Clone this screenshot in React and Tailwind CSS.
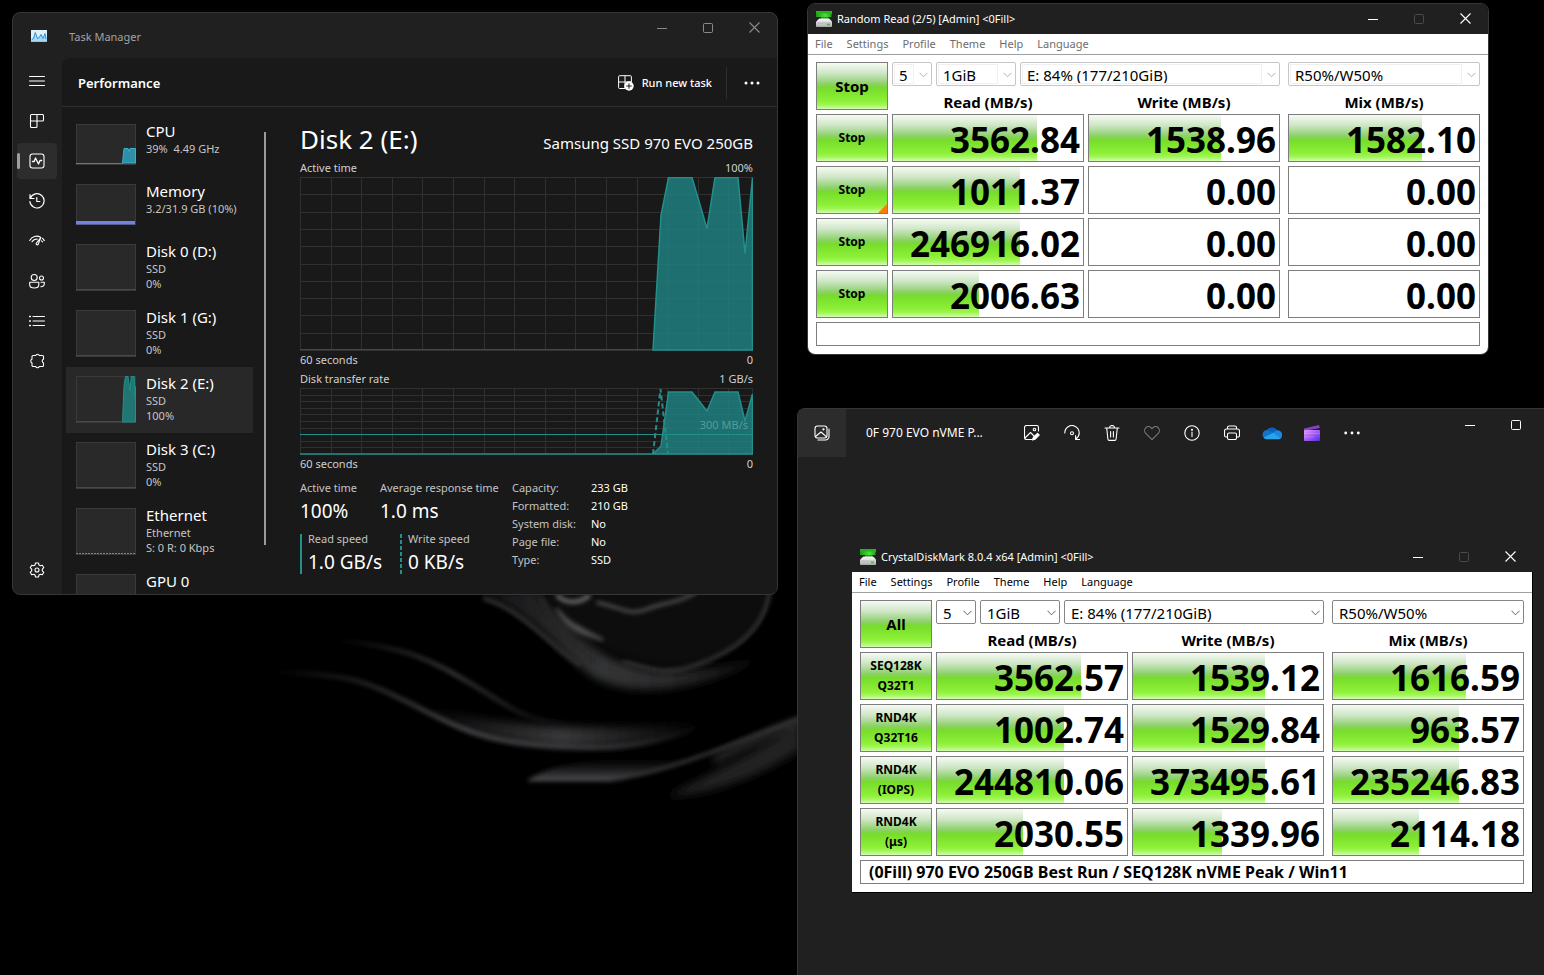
import React from "react";

const DiskIcon = () => (
  <svg width="16" height="16" viewBox="0 0 16 16" aria-hidden="true" className="shrink-0">
    <defs>
      <linearGradient id="diskGreen" x1="0" x2="1">
        <stop offset="0" stopColor="#1f9417" />
        <stop offset="0.6" stopColor="#4be03a" />
        <stop offset="1" stopColor="#1fa617" />
      </linearGradient>
      <linearGradient id="diskGrey" x1="0" y1="0" x2="0" y2="1">
        <stop offset="0" stopColor="#f4f4f4" />
        <stop offset="0.5" stopColor="#dcdcde" />
        <stop offset="1" stopColor="#a4a4a8" />
      </linearGradient>
    </defs>
    <rect x="0" y="0" width="16" height="3" fill="#27b31c" />
    <rect x="0" y="2.500" width="15.500" height="3.500" fill="url(#diskGreen)" />
    <rect x="5" y="6" width="7.500" height="2" fill="#23991a" />
    <path d="M3.500 7.500h9.500Q15.500 9 16 11v4.200a.8.800 0 0 1-.8.800H.8a.8.800 0 0 1-.8-.8V11Q1 9 3.500 7.500z" fill="url(#diskGrey)" />
    <path d="M.8 12h14.400" stroke="#98989c" strokeWidth=".6" />
    <rect x="11" y="12.800" width="3" height="1.400" fill="#35c327" />
  </svg>
);

function CaptionButtons({ color, disabledMax, height, noClose }) {
  const base = "flex w-[46px] items-center justify-center " + height + " " + color;
  return (
    <div className="ml-auto flex shrink-0 self-start">
      <button aria-label="Minimize" className={base}>
        <svg width="10" height="10" viewBox="0 0 10 10"><path d="M0 5.500h10" stroke="currentColor" /></svg>
      </button>
      <button aria-label="Maximize" className={base} disabled={disabledMax}>
        <svg width="10" height="10" viewBox="0 0 10 10" className={disabledMax ? "text-[#4a4a4a]" : ""}>
          <rect x=".5" y=".5" width="9" height="9" rx="1" fill="none" stroke="currentColor" />
        </svg>
      </button>
      {!noClose && (
        <button aria-label="Close" className={base}>
          <svg width="11" height="11" viewBox="0 0 11 11"><path d="M.5.5l10 10M10.500.5l-10 10" stroke="currentColor" strokeWidth="1.100" /></svg>
        </button>
      )}
    </div>
  );
}

/* ---------- Disk benchmark window ---------- */

function Combo({ label, value, disabled, className }) {
  return (
    <div className={"relative h-6 " + className}>
      <select
        aria-label={label}
        disabled={disabled}
        defaultValue={value}
        className={
          "block h-6 w-full appearance-none rounded-xs border bg-white pl-1.5 pt-0.5 text-[15px] leading-5 text-black opacity-100 " +
          (disabled ? "border-[#c6c6c6]" : "border-[#868686]")
        }
      >
        <option>{value}</option>
      </select>
      {disabled && <span className="pointer-events-none absolute inset-y-0.5 left-0.5 right-[18px] border border-[#f0f0f0]" />}
      <svg width="9" height="6" viewBox="0 0 9 6" className={"pointer-events-none absolute right-1 top-2.5 " + (disabled ? "text-[#b4b4b4]" : "text-[#606060]")}>
        <path d="M.5.8l4 4 4-4" fill="none" stroke="currentColor" />
      </svg>
    </div>
  );
}

const GREEN =
  "bg-[linear-gradient(to_bottom,#f6fbf4_0%,#cfe6c8_22%,#8bd066_46%,#77dc2b_54%,#8cf036_82%,#9ef552_90%,#d2fbb0_100%)]";

function Score({ value, fill, last }) {
  return (
    <td className={"p-0 " + (last ? "pl-1" : "")}>
      <div className="relative h-12 border border-[#7d7d7d] bg-white">
        <div className={"absolute inset-y-0 left-0 " + GREEN} style={{ width: fill + "%" }} />
        <div className="relative pr-[3px] text-right text-[35px] font-bold leading-[49px] text-black">{value}</div>
      </div>
    </td>
  );
}

function Benchmark({ title, menuColor, disabled, main, rows, status, frame, bodyFrame, statusLabel }) {
  return (
    <section className={"flex max-w-full flex-col overflow-hidden " + frame}>
      <header className="flex h-[30px] items-center bg-[#202020] pl-2">
        <DiskIcon />
        <h2 className="pl-[5px] text-[11px] leading-4 text-white">{title}</h2>
        <CaptionButtons color="text-white" height="h-[29px]" disabledMax />
      </header>
      <div className={"flex flex-col " + bodyFrame}>
        <nav className={"flex h-[21px] border-b border-[#a0a0a0] bg-white text-[11px] leading-5 " + menuColor}>
          {["File", "Settings", "Profile", "Theme", "Help", "Language"].map((m) => (
            <button key={m} className="px-[7px]">{m}</button>
          ))}
        </nav>
        <div className="flex flex-col bg-white px-1 pb-2 pt-[3px] text-black">
          <table className="w-full table-fixed border-separate border-spacing-1">
            <colgroup>
              <col className="w-[72px]" />
              <col />
              <col />
              <col className="w-[196px]" />
            </colgroup>
            <tbody>
              <tr>
                <td rowSpan={2} className="p-0">
                  <button className={"block h-12 w-full border border-[#7d7d7d] text-[15px] font-bold leading-5 " + GREEN}>{main}</button>
                </td>
                <td colSpan={2} className="p-0">
                  <div className="flex gap-1">
                    <Combo label="Test count" value="5" disabled={disabled} className="w-10" />
                    <Combo label="Test size" value="1GiB" disabled={disabled} className="w-20" />
                    <Combo label="Drive" value="E: 84% (177/210GiB)" disabled={disabled} className="flex-1" />
                  </div>
                </td>
                <td className="p-0 pl-1">
                  <Combo label="Mix ratio" value="R50%/W50%" disabled={disabled} className="w-full" />
                </td>
              </tr>
              <tr className="h-5 text-[15px] leading-4">
                <th className="p-0 pt-1">Read (MB/s)</th>
                <th className="p-0 pt-1">Write (MB/s)</th>
                <th className="p-0 pl-1 pt-1">Mix (MB/s)</th>
              </tr>
              {rows.map((r, i) => (
                <tr key={i}>
                  <td className="p-0">
                    <button className={"relative block h-12 w-full border border-[#7d7d7d] text-xs font-bold leading-5 " + GREEN}>
                      {r.label.map((l) => (
                        <span key={l} className="block">{l}</span>
                      ))}
                      {r.mark && (
                        <svg width="9" height="9" viewBox="0 0 9 9" className="absolute bottom-0 right-0">
                          <path d="M9 0v9H0z" fill="#ff7a0a" />
                        </svg>
                      )}
                    </button>
                  </td>
                  {r.values.map(([v, f], j) => (
                    <Score key={j} value={v} fill={f} last={j === 2} />
                  ))}
                </tr>
              ))}
            </tbody>
          </table>
          <input
            aria-label={statusLabel}
            defaultValue={status}
            className="mx-1 h-6 border border-[#7d7d7d] bg-white px-2 text-[16px] font-bold leading-5"
          />
        </div>
      </div>
    </section>
  );
}

const RUNNING = [
  { label: ["Stop"], values: [["3562.84", 76], ["1538.96", 69.5], ["1582.10", 70]] },
  { label: ["Stop"], mark: true, values: [["1011.37", 67], ["0.00", 0], ["0.00", 0]] },
  { label: ["Stop"], values: [["246916.02", 67], ["0.00", 0], ["0.00", 0]] },
  { label: ["Stop"], values: [["2006.63", 45], ["0.00", 0], ["0.00", 0]] },
];

const BEST = [
  { label: ["SEQ128K", "Q32T1"], values: [["3562.57", 76], ["1539.12", 69.5], ["1616.59", 70]] },
  { label: ["RND4K", "Q32T16"], values: [["1002.74", 67], ["1529.84", 69.5], ["963.57", 66.5]] },
  { label: ["RND4K", "(IOPS)"], values: [["244810.06", 67], ["373495.61", 69.5], ["235246.83", 66.5]] },
  { label: ["RND4K", "(μs)"], values: [["2030.55", 45], ["1339.96", 47], ["2114.18", 45]] },
];

/* ---------- Task manager ---------- */

const Svg = ({ children, size = 16 }) => (
  <svg width={size} height={size} viewBox="0 0 16 16" fill="none" stroke="currentColor" strokeLinecap="round" strokeLinejoin="round" strokeWidth="1.100" aria-hidden="true">
    {children}
  </svg>
);

const NAV = [
  ["Menu", <Svg><path d="M.5 3.500h15M.5 8h15M.5 12.500h15" /></Svg>],
  ["Processes", <Svg><path d="M2.500 1.500h11a1 1 0 0 1 1 1V7a1 1 0 0 1-1 1H2.500a1 1 0 0 1-1-1V2.500a1 1 0 0 1 1-1zM1.500 7v6.500a1 1 0 0 0 1 1H7a1 1 0 0 0 1-1v-12" /></Svg>],
  ["Performance", <Svg><rect x="1" y="1" width="14" height="14" rx="2.500" /><path d="M3.500 8.500h1.700L6.500 5l3 6 1.500-3.500h1.700" strokeWidth="1.300" /></Svg>],
  ["App history", <Svg><path d="M1 1.500v4h4M1.300 5.400A7.100 7.100 0 1 1 .9 8.500M7.800 4.500v4h3" strokeWidth="1.200" /></Svg>],
  ["Startup apps", <Svg><path d="M.7 7.500C3 3.200 8 2.100 11.500 4.200M13.600 5.300l1.700 2.300M3 8.800C4.200 6.800 6 6 8.300 6M12.500 7.800l1 1M11.800 4.500L9.300 11c-.5 1.400-2.500.8-2.100-.7z" /></Svg>],
  ["Users", <Svg><circle cx="5.200" cy="4.500" r="3" /><circle cx="12.500" cy="5" r="2" /><path d="M.7 9.300h9.100v2.400c0 2.200-1.700 3.300-4.500 3.300S.7 13.900.7 11.700zM12 9.300h3.300v1.500c0 1.900-1.200 2.900-3.500 2.900" /></Svg>],
  ["Details", <Svg><path d="M4 3.500h11.500M4 8h11.500M4 12.500h11.500" /><path d="M.6 3.500h.8M.6 8h.8M.6 12.500h.8" strokeWidth="1.400" /></Svg>],
  ["Services", <Svg><path d="M4 2.500h2.700a1.900 1.900 0 0 1 3.600 0h3.200a1 1 0 0 1 1 1v2.800a1.900 1.900 0 0 0 0 3.600v2.600a1 1 0 0 1-1 1h-3.200a1.900 1.900 0 0 1-3.600 0H4a1 1 0 0 1-1-1V9.900a1.900 1.900 0 0 1 0-3.600V3.500a1 1 0 0 1 1-1z" /></Svg>],
];

const GearIcon = () => (
  <Svg>
    <circle cx="8" cy="8" r="2" />
    <path d="M6.500 1h3l.5 2.100 1.300.7 2-.6 1.500 2.500-1.500 1.500v1.600l1.500 1.500-1.500 2.500-2-.6-1.300.7-.5 2.100h-3L6 12.900l-1.300-.7-2 .6-1.500-2.500 1.500-1.500V7.200L1.200 5.700l1.500-2.500 2 .6L6 3.100z" />
  </Svg>
);

const DEVICES = [
  { name: "CPU", lines: ["39%  4.49 GHz"], kind: "cpu" },
  { name: "Memory", lines: ["3.2/31.9 GB (10%)"], kind: "mem" },
  { name: "Disk 0 (D:)", lines: ["SSD", "0%"], kind: "idle" },
  { name: "Disk 1 (G:)", lines: ["SSD", "0%"], kind: "idle" },
  { name: "Disk 2 (E:)", lines: ["SSD", "100%"], kind: "disk", selected: true },
  { name: "Disk 3 (C:)", lines: ["SSD", "0%"], kind: "idle" },
  { name: "Ethernet", lines: ["Ethernet", "S: 0 R: 0 Kbps"], kind: "net" },
  { name: "GPU 0", lines: [], kind: "gpu" },
];

function Thumb({ kind, h }) {
  return (
    <svg width="60" height={h} viewBox={"0 0 60 " + h} className="shrink-0" aria-hidden="true">
      <rect x=".5" y=".5" width="59" height={h - 1} fill="#292929" stroke="#3a3a3a" />
      {kind === "cpu" && (
        <g>
          <path d={"M0 " + (h - 1.500) + "H47"} stroke="#2b8ea6" />
          <path d="M46.500 39l1.500-14.500h4l1 3 1-3h5.500V39z" fill="#2d8fa8" stroke="#35b3d1" />
        </g>
      )}
      {kind === "mem" && <rect x="0" y={h - 4} width="59" height="3.500" fill="#7382e0" />}
      {kind === "idle" && <path d={"M0 " + (h - 1.500) + "h60"} stroke="#235957" />}
      {kind === "disk" && (
        <g>
          <path d={"M0 " + (h - 1.500) + "h47"} stroke="#235957" />
          <path d="M46.500 46L48 10l1.500-9.500h2.500l2 14 1.200-14h3l.8 20 .5-10V46z" fill="#217572" stroke="#238f8a" />
        </g>
      )}
      {kind === "net" && <path d={"M0 " + (h - 1.500) + "h60"} stroke="#a06a92" strokeDasharray="2 1" />}
    </svg>
  );
}

function Grid({ w, h, rows }) {
  const xs = [];
  for (let i = 0; i <= 14; i++) xs.push(Math.round(i * 30.600) + 0.5);
  xs.push(w - 0.5);
  const ys = [];
  for (let i = 0; i <= rows; i++) ys.push(Math.min(h - 0.5, Math.round((i * (h - 1)) / rows) + 0.5));
  return (
    <g stroke="#303030">
      {xs.map((x) => <path key={"x" + x} d={"M" + x + " 0V" + h} />)}
      {ys.map((y) => <path key={"y" + y} d={"M0 " + y + "H" + w} />)}
    </g>
  );
}

const Stat = ({ label, value }) => (
  <div>
    <div className="text-[11px] leading-[18px] text-[#c3c3c3]">{label}</div>
    <div className="text-[19px] leading-7 text-white">{value}</div>
  </div>
);

const INFO = [
  ["Capacity:", "233 GB"],
  ["Formatted:", "210 GB"],
  ["System disk:", "No"],
  ["Page file:", "No"],
  ["Type:", "SSD"],
];

function Caption({ left, right }) {
  return (
    <div className="flex justify-between text-[11px] leading-[18px] text-[#d0d0d0]">
      <span>{left}</span>
      <span>{right}</span>
    </div>
  );
}

function TaskManager() {
  return (
    <section className="absolute left-3 top-3 flex h-[583px] w-[766px] max-w-full flex-col overflow-hidden rounded-lg border border-[#363636] bg-[#202020] text-white">
      <header className="flex h-[45px] shrink-0 pl-[18px]">
        <svg width="16" height="12" viewBox="0 0 16 12" className="mt-[17px]" aria-hidden="true">
          <rect width="16" height="12" fill="#dff1fb" />
          <path d="M0 12V9l2-1 2-5 2 5 2-1 2-3 2 4 2-4 2 5v3z" fill="#a5d8f5" />
          <path d="M1 9.500l1.500-1L4.300 2.500 6.500 8.500l1.700-1 1.800-3L12 8.500l2-5L15 9" fill="none" stroke="#2a94e0" />
          <path d="M0 11.500h16" stroke="#8cc6ea" />
        </svg>
        <h1 className="mt-4 pl-[22px] text-[11px] leading-4 text-[#a3a3a3]">Task Manager</h1>
        <CaptionButtons color="text-[#8a8a8a]" height="h-[29px]" />
      </header>
      <div className="flex min-h-0 flex-1">
        <nav className="flex w-[49px] shrink-0 flex-col gap-1 px-1 pb-1.5 pt-[5px]">
          {NAV.map(([label, icon]) => (
            <button
              key={label}
              aria-label={label}
              className={"relative flex h-9 w-10 items-center justify-center rounded " + (label === "Performance" ? "bg-[#2d2d2d]" : "")}
            >
              {label === "Performance" && <span className="absolute left-0 top-2.5 h-4 w-[3px] rounded-full bg-[#9e9e9e]" />}
              {icon}
            </button>
          ))}
          <button aria-label="Settings" className="mt-auto flex h-9 w-10 items-center justify-center rounded"><GearIcon /></button>
        </nav>
        <main className="flex min-w-0 flex-1 flex-col rounded-tl-lg bg-[#191919]">
          <div className="flex h-[49px] shrink-0 items-center border-b border-[#2e2e2e] pl-4 pt-px">
            <h2 className="text-[13px] font-semibold leading-5">Performance</h2>
            <button className="ml-auto flex items-center gap-2 pr-3.5 text-[11px] font-medium leading-5">
              <svg width="16" height="16" viewBox="0 0 16 16" fill="none" stroke="currentColor" aria-hidden="true">
                <path d="M7 13.500H1.500a.9.900 0 0 1-.9-.9v-11a.9.900 0 0 1 .9-.9h11a.9.900 0 0 1 .9.900V7M.6 7h6.400V.8M7 7v6M7 7h6" />
                <circle cx="11" cy="11" r="4.700" fill="#fff" stroke="none" />
                <path d="M11 8.300v5.400M8.300 11h5.400" stroke="#191919" />
              </svg>
              Run new task
            </button>
            <span className="h-8 w-px bg-[#2e2e2e]" />
            <button aria-label="See more" className="flex h-8 w-[50px] items-center justify-center">
              <svg width="16" height="4" viewBox="0 0 16 4"><g fill="currentColor"><circle cx="2" cy="2" r="1.500" /><circle cx="8" cy="2" r="1.500" /><circle cx="14" cy="2" r="1.500" /></g></svg>
            </button>
          </div>
          <div className="flex min-h-0 flex-1">
            <ul className="ml-1 w-[187px] shrink-0 overflow-hidden pt-2">
              {DEVICES.map((d) => {
                const tall = d.lines.length !== 1;
                return (
                  <li key={d.name}>
                    <button className={"flex w-full gap-2.5 px-2.5 text-left " + (tall ? "h-[66px] " : "h-[60px] ") + (d.selected ? "bg-[#282828]" : "")}>
                      <span className="mt-[9px]"><Thumb kind={d.kind} h={tall ? 47 : 41} /></span>
                      <span className="flex flex-col whitespace-pre pt-[7px]">
                        <span className="text-[15px] leading-[19px]">{d.name}</span>
                        {d.lines.map((l) => (
                          <span key={l} className="text-[11px] leading-[15px] text-[#c6c6c6]">{l}</span>
                        ))}
                      </span>
                    </button>
                  </li>
                );
              })}
            </ul>
            <div className="ml-[11px] mt-[25px] h-[413px] w-0.5 shrink-0 bg-[#9b9b9b]" />
            <div className="ml-[34px] mr-6 flex min-w-0 flex-1 flex-col pt-3">
              <div className="flex items-baseline justify-between">
                <h3 className="text-[26px] leading-10">Disk 2 (E:)</h3>
                <span className="text-[15px] leading-5">Samsung SSD 970 EVO 250GB</span>
              </div>
              <Caption left="Active time" right="100%" />
              <svg viewBox="0 0 453 174" preserveAspectRatio="none" className="h-[174px] w-full shrink-0" aria-label="Active time chart">
                <Grid w={453} h={174} rows={10} />
                <path d="M0 172.500h353" stroke="#1e5a58" />
                <path d="M353 173l8-135 7.500-37.500H392l15 51 8-51h23l7 76 7.500-76V173z" fill="#1f8482" fillOpacity=".82" />
                <path d="M353 173l8-135 7.500-37.500H392l15 51 8-51h23l7 76 7.500-76V173z" fill="none" stroke="#238f8b" strokeWidth="1.500" />
              </svg>
              <Caption left="60 seconds" right="0" />
              <div className="mt-px"><Caption left="Disk transfer rate" right="1 GB/s" /></div>
              <div className="relative">
                <svg viewBox="0 0 453 67" preserveAspectRatio="none" className="block h-[67px] w-full" aria-label="Disk transfer rate chart">
                  <Grid w={453} h={67} rows={10} />
                  <path d="M353 66l8-8 7.500-54H392l15 19 8-19h23l7 29 7.500-27V66z" fill="#1f8482" fillOpacity=".82" />
                  <path d="M353 66l8-8 7.500-54H392l15 19 8-19h23l7 29 7.500-27V66H0" fill="none" stroke="#238f8b" strokeWidth="1.500" />
                  <path d="M353 66l7.500-65L368 66" fill="none" stroke="#238f8b" strokeWidth="2" strokeDasharray="5 3" />
                  <path d="M0 46.500h453" stroke="#238f8b" />
                </svg>
                <span className="absolute right-[5px] top-7 text-[11px] leading-[18px] text-[#519e9c]">300 MB/s</span>
              </div>
              <Caption left="60 seconds" right="0" />
              <div className="mt-1.5 flex">
                <div className="flex w-[212px] shrink-0 flex-col gap-[5px]">
                  <div className="flex">
                    <div className="w-20 shrink-0"><Stat label="Active time" value="100%" /></div>
                    <div className="whitespace-nowrap"><Stat label="Average response time" value="1.0 ms" /></div>
                  </div>
                  <div className="flex">
                    <div className="flex w-[100px] gap-1.5">
                      <span className="mb-0.5 mt-1 border-l-2 border-[#23908c]" />
                      <Stat label="Read speed" value="1.0 GB/s" />
                    </div>
                    <div className="flex gap-1.5">
                      <span className="mb-0.5 mt-1 w-0.5 bg-[repeating-linear-gradient(to_bottom,#23908c_0_4px,transparent_4px_6px)]" />
                      <Stat label="Write speed" value="0 KB/s" />
                    </div>
                  </div>
                </div>
                <dl className="grid grid-cols-[79px_auto] content-start text-[11px] leading-[18px]">
                  {INFO.map(([k, v]) => (
                    <React.Fragment key={k}>
                      <dt className="text-[#c3c3c3]">{k}</dt>
                      <dd>{v}</dd>
                    </React.Fragment>
                  ))}
                </dl>
              </div>
            </div>
          </div>
        </main>
      </div>
    </section>
  );
}

/* ---------- Photo viewer ---------- */

const PHOTO_TOOLS = [
  ["Edit image", <Svg><path d="M8 14.500H2.500a2 2 0 0 1-2-2v-10a2 2 0 0 1 2-2h10a2 2 0 0 1 2 2V6M1 13l5.500-5.500L10 11" /><circle cx="10.500" cy="4.500" r="1.300" /><path d="M8.500 15l.8-2.500L13.500 8.300l1.700 1.700L11 14.300z" fill="currentColor" /></Svg>],
  ["Rotate", <Svg><path d="M.8 8A7.200 7.200 0 1 1 12 13.800M11.600 10.500v4h4" /><circle cx="8" cy="8.300" r="1.500" /></Svg>],
  ["Delete", <Svg><path d="M1 3h14M5.500 3a2.500 2.500 0 0 1 5 0M2.700 3l1.200 11a1.500 1.500 0 0 0 1.500 1.400h5.200a1.500 1.500 0 0 0 1.500-1.400L13.300 3M6.600 6.500v5.500M9.400 6.500v5.500" /></Svg>],
  ["Favorite", <span className="text-[#777]"><Svg><path d="M8 14.700L1.700 8.300a3.900 3.900 0 0 1 0-5.500 3.900 3.900 0 0 1 5.500 0L8 3.600l.8-.8a3.900 3.900 0 0 1 5.500 0 3.900 3.900 0 0 1 0 5.500z" /></Svg></span>],
  ["File info", <Svg><circle cx="8" cy="8" r="7.200" /><path d="M8 7v4.500" /><circle cx="8" cy="4.700" r=".5" fill="currentColor" /></Svg>],
  ["Print", <Svg><path d="M3.500 4V2.500a1.500 1.500 0 0 1 1.500-1.500h6a1.500 1.500 0 0 1 1.500 1.500V4M3.500 12H2a1.500 1.500 0 0 1-1.500-1.500V6A2 2 0 0 1 2.500 4h11a2 2 0 0 1 2 2v4.500A1.500 1.500 0 0 1 14 12h-1.500M5 8h6a1.500 1.500 0 0 1 1.500 1.500v3.500a1.500 1.500 0 0 1-1.500 1.500H5A1.500 1.500 0 0 1 3.500 13V9.500A1.500 1.500 0 0 1 5 8z" /></Svg>],
  [
    "OneDrive",
    <svg width="20" height="14" viewBox="0 0 20 14" aria-hidden="true">
      <path d="M4.500 4.500a6 6 0 0 1 10.800.8L12 9 4 6z" fill="#0f5fb8" />
      <path d="M5.200 3.900A4.600 4.600 0 0 0 2 11.800l10-4.500z" fill="#1273cc" />
      <path d="M11.500 6.800A4.500 4.500 0 0 1 20 9.500c0 1.500-.6 2.500-1.500 3.200z" fill="#1c86e0" />
      <path d="M1.500 11.400L11.500 6.800l7.300 5.700a3 3 0 0 1-1.800.8H4.500a4 4 0 0 1-3-1.900z" fill="#27a4ee" />
    </svg>,
  ],
  [
    "Clipchamp",
    <svg width="16" height="16" viewBox="0 0 16 16" aria-hidden="true">
      <defs>
        <linearGradient id="clip" x1="0" y1="0" x2="1" y2="1">
          <stop offset="0" stopColor="#e49bf5" />
          <stop offset=".5" stopColor="#a45cf2" />
          <stop offset="1" stopColor="#4f2df0" />
        </linearGradient>
      </defs>
      <path d="M0 3.500L15 0l.8 3L0 6z" fill="#8442c4" />
      <rect y="5" width="16" height="11" rx=".8" fill="url(#clip)" />
      <path d="M0 8.500h16M0 12h10" stroke="#fff" strokeOpacity=".18" />
    </svg>,
  ],
  ["See more", <svg width="16" height="4" viewBox="0 0 16 4"><g fill="currentColor"><circle cx="1.700" cy="2" r="1.400" /><circle cx="8" cy="2" r="1.400" /><circle cx="14.300" cy="2" r="1.400" /></g></svg>],
];

function PhotoViewer() {
  return (
    <section className="absolute bottom-0 left-[797px] right-0 top-[408px] flex flex-col overflow-hidden rounded-tl-lg border-l border-t border-[#363636] bg-[#202020] text-white">
      <header className="flex h-12 shrink-0 items-center pr-[5px]">
        <button aria-label="Gallery" className="flex h-12 w-12 shrink-0 items-center justify-center bg-[#2c2c2c]">
          <Svg><rect x="1" y="1" width="12" height="12" rx="2.500" /><path d="M1.500 11.500L7 7l5.500 4.800M4 15h7.500A3.500 3.500 0 0 0 15 11.500V4" /><circle cx="9.500" cy="4.300" r=".6" /></Svg>
        </button>
        <span className="w-[146px] shrink-0 pl-5 text-xs leading-4">0F 970 EVO nVME P...</span>
        <div className="flex pl-5">
          {PHOTO_TOOLS.map(([label, icon]) => (
            <button key={label} aria-label={label} className="flex h-10 w-10 items-center justify-center">{icon}</button>
          ))}
        </div>
        <CaptionButtons color="text-white" height="h-8" noClose />
      </header>
      <div className="pl-[54px] pr-[11px] pt-[85px]">
        <Benchmark
          title="CrystalDiskMark 8.0.4 x64 [Admin] <0Fill>"
          menuColor="text-black"
          main="All"
          rows={BEST}
          status="(0Fill) 970 EVO 250GB Best Run / SEQ128K nVME Peak / Win11"
          statusLabel="Result comment"
          frame="w-[681px]"
          bodyFrame="border-b border-r border-black"
        />
      </div>
    </section>
  );
}

/* Smoke trails of the desktop background */
function Wallpaper() {
  return (
    <svg width="530" height="230" viewBox="0 0 1590 690" className="absolute left-[270px] top-[590px]" aria-hidden="true">
      <defs>
        <filter id="soft" x="-20%" y="-20%" width="140%" height="140%"><feGaussianBlur stdDeviation="6" /></filter>
        <filter id="haze" x="-20%" y="-40%" width="140%" height="180%"><feGaussianBlur stdDeviation="13" /></filter>
        <linearGradient id="fadeIn" x1="0" x2="1">
          <stop offset="0" stopColor="#5a5a5c" stopOpacity="0" />
          <stop offset=".45" stopColor="#565659" stopOpacity=".8" />
          <stop offset=".8" stopColor="#4a4a4d" stopOpacity=".6" />
          <stop offset="1" stopColor="#4a4a4d" stopOpacity="0" />
        </linearGradient>
        <linearGradient id="fadeBoth" x1="0" x2="1">
          <stop offset="0" stopColor="#48484a" stopOpacity="0" />
          <stop offset=".5" stopColor="#454547" stopOpacity=".8" />
          <stop offset="1" stopColor="#454547" stopOpacity="0" />
        </linearGradient>
        <linearGradient id="fadeRing" x1="0" x2="1">
          <stop offset="0" stopColor="#2a2b2c" stopOpacity=".4" />
          <stop offset=".4" stopColor="#343536" />
          <stop offset=".75" stopColor="#232323" />
          <stop offset="1" stopColor="#1c1c1c" stopOpacity=".2" />
        </linearGradient>
        <linearGradient id="fadeWing" x1="0" x2="0" y1="0" y2="1">
          <stop offset="0" stopColor="#1a1a1b" stopOpacity="0" />
          <stop offset="1" stopColor="#626266" />
        </linearGradient>
      </defs>
      <g fill="none">
        <g filter="url(#haze)">
          <path d="M620 10C800 70 850 170 960 255C1080 330 1300 310 1540 170C1440 230 1200 270 1080 225C950 190 870 90 790 0z" fill="url(#fadeRing)" />
          <path d="M800 0h700c0 130-120 220-280 220S850 120 800 0z" fill="#0a0b0b" />
          <path d="M440 345C640 400 900 430 1310 400C1180 490 800 490 600 425z" fill="url(#fadeBoth)" />
          <path d="M1190 620C1300 560 1480 480 1590 400V480C1480 550 1350 610 1190 620z" fill="#222121" />
          <path d="M1330 510C1430 460 1520 420 1590 395" stroke="#2a2a2a" strokeWidth="24" />
        </g>
        <g filter="url(#soft)">
          <path d="M770 574C860 505 1000 510 1280 500C1200 540 1100 560 1010 574z" fill="url(#fadeWing)" fillOpacity=".85" />
          <path d="M10 248C250 250 300 280 440 350S660 470 960 472C1080 475 1180 450 1290 410" stroke="url(#fadeIn)" strokeWidth="14" />
          <path d="M200 152C420 170 500 220 610 285S760 395 900 398" stroke="url(#fadeBoth)" strokeWidth="13" />
          <path d="M1010 572C1180 550 1340 480 1590 385" stroke="#3a3a3c" strokeWidth="10" />
          <path d="M860 15C890 45 930 40 960 15" stroke="#666" strokeWidth="13" />
          <path d="M980 38C1050 50 1080 80 1130 58S1230 40 1280 5" stroke="#505050" strokeWidth="10" />
          <path d="M860 55C890 100 930 110 1000 150C940 135 890 120 860 55z" fill="#555" stroke="#4a4a4a" strokeWidth="8" />
          <path d="M1500 5C1480 130 1380 190 1280 225S1140 235 1060 215" stroke="#323232" strokeWidth="12" />
          <path d="M640 25C760 60 830 160 930 225" stroke="#303132" strokeWidth="12" />
          <path d="M810 20C850 100 910 170 980 215" stroke="#262727" strokeWidth="12" />
        </g>
      </g>
    </svg>
  );
}

export default function App() {
  return (
    <div className="relative min-h-screen overflow-hidden bg-black font-['Noto_Sans','Open_Sans',sans-serif]">
      <Wallpaper />
      <TaskManager />
      <div className="absolute left-[807px] top-[3px]">
        <Benchmark
          title="Random Read (2/5) [Admin] <0Fill>"
          menuColor="text-[#6d6d6d]"
          disabled
          main="Stop"
          rows={RUNNING}
          status=""
          statusLabel="Status"
          frame="w-[682px] rounded-lg border border-[#363636]"
          bodyFrame=""
        />
      </div>
      <PhotoViewer />
    </div>
  );
}
